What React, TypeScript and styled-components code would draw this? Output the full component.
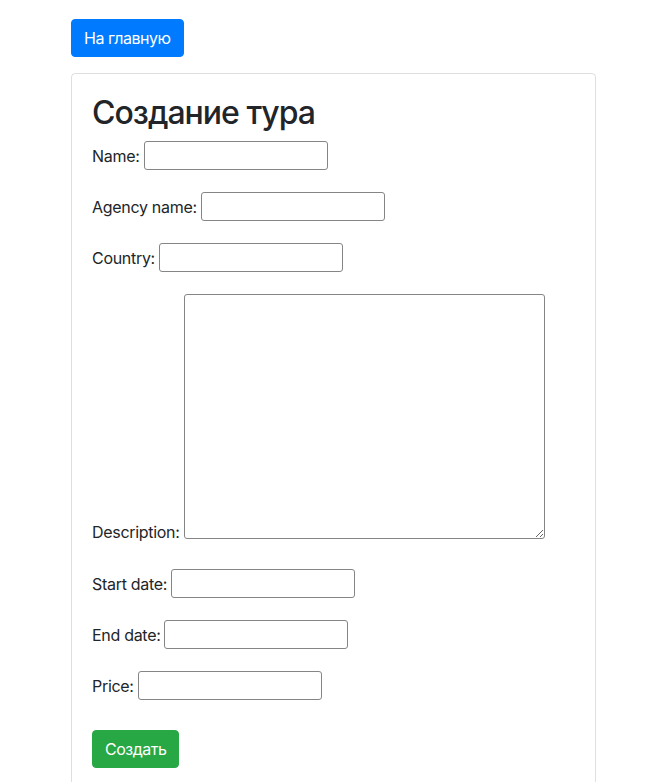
import React from "react";
import styled, { createGlobalStyle } from "styled-components";

const Global = createGlobalStyle`
  html, body { margin: 0; padding: 0; background: #fff; }
  body {
    font-family: Inter, "Noto Sans", "Liberation Sans", sans-serif;
    color: #212529;
    font-size: 16px;
    line-height: 1.5;
  }
  * { box-sizing: border-box; }
`;

const Page = styled.div`
  width: 525px;
  margin-left: 71px;
  padding-top: 19px;
`;

const Btn = styled.button<{ $variant: "primary" | "success" }>`
  display: inline-flex;
  align-items: center;
  justify-content: center;
  height: 38px;
  padding: 0 12px;
  border: 1px solid ${(p) => (p.$variant === "primary" ? "#007bff" : "#28a745")};
  background: ${(p) => (p.$variant === "primary" ? "#007bff" : "#28a745")};
  color: #fff;
  font-family: inherit;
  font-size: 16px;
  letter-spacing: -0.5px;
  border-radius: 4px;
  cursor: pointer;
`;

const TopBar = styled.div`
  margin-bottom: 16px;
`;

const Card = styled.div`
  border: 1px solid rgba(0, 0, 0, 0.125);
  border-radius: 4px;
  padding: 20px;
  padding-bottom: 24px;
`;

const Title = styled.h2`
  margin: 0 0 9px 0;
  font-size: 32px;
  font-weight: 500;
  line-height: 38px;
  letter-spacing: -1px;
`;

const Row = styled.div<{ $bottom: boolean; $gap: number }>`
  display: flex;
  align-items: ${(p) => (p.$bottom ? "flex-end" : "center")};
  gap: 4px;
  margin-bottom: ${(p) => p.$gap}px;
`;

const Label = styled.label<{ $bottom?: boolean }>`
  font-size: 16px;
  line-height: 20px;
  letter-spacing: -0.3px;
  margin-bottom: ${(p) => (p.$bottom ? "-3px" : "0")};
`;

const Input = styled.input`
  width: 184px;
  height: 29px;
  border: 1px solid #858585;
  border-radius: 3px;
  padding: 2px 4px;
  font-family: inherit;
  font-size: 14px;
  background: #fff;
  outline: none;
`;

const Area = styled.textarea`
  width: 361px;
  height: 245px;
  border: 1px solid #858585;
  border-radius: 3px;
  padding: 2px 4px;
  font-family: inherit;
  font-size: 14px;
  background: #fff;
  outline: none;
`;

const fields = [
  { label: "Name:", gap: 22 },
  { label: "Agency name:", gap: 22 },
  { label: "Country:", gap: 22 },
  { label: "Description:", gap: 30, area: true },
  { label: "Start date:", gap: 22 },
  { label: "End date:", gap: 22 },
  { label: "Price:", gap: 30 },
];

export default function App() {
  return (
    <>
      <Global />
      <Page>
        <TopBar>
          <Btn $variant="primary">На главную</Btn>
        </TopBar>
        <Card>
          <Title>Создание тура</Title>
          <form onSubmit={(e) => e.preventDefault()}>
            {fields.map((f) => (
              <Row key={f.label} $bottom={!!f.area} $gap={f.gap}>
                <Label $bottom={!!f.area}>{f.label}</Label>
                {f.area ? <Area /> : <Input type="text" />}
              </Row>
            ))}
            <Btn $variant="success" type="submit">Создать</Btn>
          </form>
        </Card>
      </Page>
    </>
  );
}
